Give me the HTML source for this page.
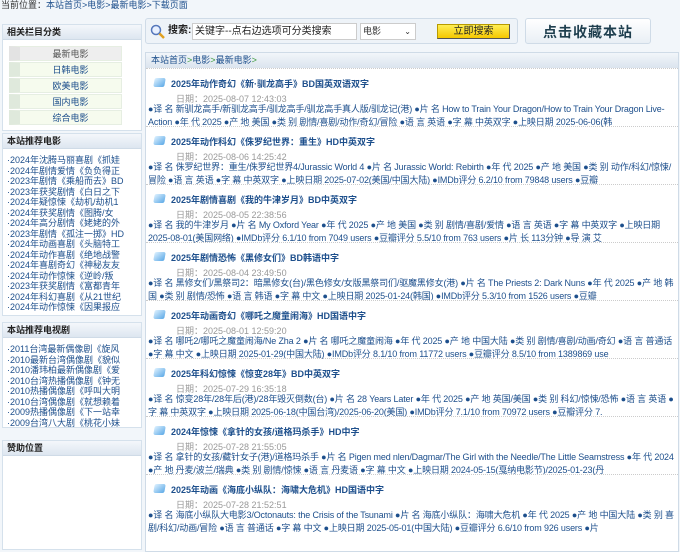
<!DOCTYPE html>
<html><head><meta charset="utf-8"><style>
*{margin:0;padding:0;box-sizing:border-box}
body{width:680px;height:544px;overflow:hidden;background:#f2f6fa;font-family:"Liberation Sans","Noto Sans CJK SC",sans-serif;font-size:9px;color:#333;position:relative}
a{color:#1d4f8c;text-decoration:none}
.crumb{position:absolute;left:1px;top:0;font-size:9px;color:#1d4f8c;line-height:10px}
.box{position:absolute;left:2px;width:140px;background:#fff;border:1px solid #d5e1ec}
.bh{height:15px;background:linear-gradient(#f4f7fb,#dde6f0);font-weight:bold;font-size:9px;line-height:15px;padding-left:4px;color:#222;border-bottom:1px solid #cfdbe7}
.cat{margin:6px 0 0 6px;width:113px}
.cat div{height:15px;margin-bottom:1px;background:#f6fbee;text-align:center;line-height:15px;color:#1d4f8c;border:1px solid #e6eee2;border-left:11px solid #dfe9dc}
.cat div.first{background:#eee;border-left-color:#e3e3e3;color:#555}
.list{padding:6px 0 0 4px;line-height:10.5px;white-space:nowrap;overflow:hidden}
.list a{display:block;color:#1d4f8c}
.srch{position:absolute;left:145px;top:18px;width:373px;height:26px;border:1px solid #cfdbe7;border-radius:3px;background:#eef3f8}
.fav{position:absolute;left:525px;top:18px;width:126px;height:26px;border:1px solid #cfdbe7;border-radius:3px;background:linear-gradient(#fff,#e9eff5);font-size:14px;font-weight:bold;color:#1e3e4e;text-align:center;line-height:26px;letter-spacing:1px}
.main{position:absolute;left:145px;top:52px;width:534px;height:500px;background:#fff;border:1px solid #cfdbe7}
.mh{height:15px;background:linear-gradient(#f2f6fa,#dbe4ee);line-height:15px;padding-left:5px;color:#1d4f8c;font-size:9px}
.mh b{color:#3a9a3a;font-weight:normal}
.it{height:58px;border-top:1px dotted #ccc;position:relative;padding:0 2px}
.it .t{position:absolute;left:25px;top:8px;font-weight:bold;color:#1d4f8c;font-size:9px}
.it .ic{position:absolute;left:8px;top:9px;width:11px;height:9px;background:linear-gradient(135deg,#dff2ff,#5aa8e6);transform:skewX(-10deg);border-radius:2px}
.it .d{position:absolute;left:30px;top:23px;color:#999;font-size:9px}
.it .x{position:absolute;left:2px;top:34px;right:4px;line-height:12.5px;color:#1d4f8c;font-size:9px;height:26px;overflow:hidden;letter-spacing:-0.15px}
</style></head><body>
<div class="crumb"><span style="color:#333">当前位置：</span>本站首页&gt;电影&gt;最新电影&gt;下载页面</div>

<div class="box" style="top:24px;height:107px"><div class="bh">相关栏目分类</div>
<div class="cat"><div class="first">最新电影</div><div>日韩电影</div><div>欧美电影</div><div>国内电影</div><div>综合电影</div></div></div>

<div class="box" style="top:133px;height:183px"><div class="bh">本站推荐电影</div>
<div class="list"><a>·2024年沈腾马丽喜剧《抓娃</a><a>·2024年剧情爱情《负负得正</a><a>·2023年剧情《乘船而去》BD</a><a>·2023年获奖剧情《白日之下</a><a>·2024年疑惊悚《劫机/劫机1</a><a>·2024年获奖剧情《图腾/女</a><a>·2024年高分剧情《姥姥的外</a><a>·2023年剧情《孤注一掷》HD</a><a>·2024年动画喜剧《头脑特工</a><a>·2024年动作喜剧《绝地战警</a><a>·2024年喜剧奇幻《神秘友友</a><a>·2024年动作惊悚《逆岭/叛</a><a>·2023年获奖剧情《富都青年</a><a>·2024年科幻喜剧《从21世纪</a><a>·2024年动作惊悚《因果报应</a></div></div>

<div class="box" style="top:322px;height:106px"><div class="bh">本站推荐电视剧</div>
<div class="list"><a>·2011台湾最新偶像剧《旋风</a><a>·2010最新台湾偶像剧《貌似</a><a>·2010潘玮柏最新偶像剧《爱</a><a>·2010台湾热播偶像剧《钟无</a><a>·2010热播偶像剧《呼叫大明</a><a>·2010台湾偶像剧《就想赖着</a><a>·2009热播偶像剧《下一站幸</a><a>·2009台湾八大剧《桃花小妹</a></div></div>

<div class="box" style="top:440px;height:110px"><div class="bh">赞助位置</div></div>

<div class="srch">
<svg style="position:absolute;left:4px;top:5px" width="16" height="16"><circle cx="6" cy="6" r="4.5" fill="#e8f0ff" stroke="#5577bb" stroke-width="1.5"/><line x1="9.5" y1="9.5" x2="14" y2="14" stroke="#e0a020" stroke-width="2.5"/></svg>
<span style="position:absolute;left:22px;top:5px;font-size:10px;line-height:14px;font-weight:bold;color:#222">搜索:</span>
<div style="position:absolute;left:46px;top:4px;width:165px;height:17px;background:#fff;border:1px solid #ccc;font-size:10px;line-height:15px;padding-left:2px;color:#222">关键字--点右边选项可分类搜索</div>
<div style="position:absolute;left:214px;top:4px;width:56px;height:17px;background:#fff;border:1px solid #ccc;font-size:9px;line-height:15px;padding-left:2px">电影<span style="position:absolute;right:4px;font-size:8px">⌄</span></div>
<div style="position:absolute;left:291px;top:5px;width:73px;height:15px;background:linear-gradient(#ffee55,#f5c800);border:1px solid #b89b00;border-right-color:#555;border-bottom-color:#555;font-size:10px;text-align:center;line-height:13px;color:#222">立即搜索</div>
</div>
<div class="fav">点击收藏本站</div>

<div class="main"><div class="mh">本站首页<b>&gt;</b>电影<b>&gt;</b>最新电影<b>&gt;</b></div>
<div class="it"><span class="ic"></span><a class="t">2025年动作奇幻《新·驯龙高手》BD国英双语双字</a><span class="d">日期：2025-08-07 12:43:03</span><div class="x">●译 名 新驯龙高手/新驯龙高手/驯龙高手/驯龙高手真人版/驯龙记(港) ●片 名 How to Train Your Dragon/How to Train Your Dragon Live-Action ●年 代 2025 ●产 地 美国 ●类 别 剧情/喜剧/动作/奇幻/冒险 ●语 言 英语 ●字 幕 中英双字 ●上映日期 2025-06-06(韩</div></div>
<div class="it"><span class="ic"></span><a class="t">2025年动作科幻《侏罗纪世界：重生》HD中英双字</a><span class="d">日期：2025-08-06 14:25:42</span><div class="x">●译 名 侏罗纪世界：重生/侏罗纪世界4/Jurassic World 4 ●片 名 Jurassic World: Rebirth ●年 代 2025 ●产 地 美国 ●类 别 动作/科幻/惊悚/冒险 ●语 言 英语 ●字 幕 中英双字 ●上映日期 2025-07-02(美国/中国大陆) ●IMDb评分 6.2/10 from 79848 users ●豆瓣</div></div>
<div class="it"><span class="ic"></span><a class="t">2025年剧情喜剧《我的牛津岁月》BD中英双字</a><span class="d">日期：2025-08-05 22:38:56</span><div class="x">●译 名 我的牛津岁月 ●片 名 My Oxford Year ●年 代 2025 ●产 地 美国 ●类 别 剧情/喜剧/爱情 ●语 言 英语 ●字 幕 中英双字 ●上映日期 2025-08-01(美国网络) ●IMDb评分 6.1/10 from 7049 users ●豆瓣评分 5.5/10 from 763 users ●片 长 113分钟 ●导 演 艾</div></div>
<div class="it"><span class="ic"></span><a class="t">2025年剧情恐怖《黑修女们》BD韩语中字</a><span class="d">日期：2025-08-04 23:49:50</span><div class="x">●译 名 黑修女们/黑祭司2：暗黑修女(台)/黑色修女/女版黑祭司们/驱魔黑修女(港) ●片 名 The Priests 2: Dark Nuns ●年 代 2025 ●产 地 韩国 ●类 别 剧情/恐怖 ●语 言 韩语 ●字 幕 中文 ●上映日期 2025-01-24(韩国) ●IMDb评分 5.3/10 from 1526 users ●豆瓣</div></div>
<div class="it"><span class="ic"></span><a class="t">2025年动画奇幻《哪吒之魔童闹海》HD国语中字</a><span class="d">日期：2025-08-01 12:59:20</span><div class="x">●译 名 哪吒2/哪吒之魔童闹海/Ne Zha 2 ●片 名 哪吒之魔童闹海 ●年 代 2025 ●产 地 中国大陆 ●类 别 剧情/喜剧/动画/奇幻 ●语 言 普通话 ●字 幕 中文 ●上映日期 2025-01-29(中国大陆) ●IMDb评分 8.1/10 from 11772 users ●豆瓣评分 8.5/10 from 1389869 use</div></div>
<div class="it"><span class="ic"></span><a class="t">2025年科幻惊悚《惊变28年》BD中英双字</a><span class="d">日期：2025-07-29 16:35:18</span><div class="x">●译 名 惊变28年/28年后(港)/28年毁灭倒数(台) ●片 名 28 Years Later ●年 代 2025 ●产 地 英国/美国 ●类 别 科幻/惊悚/恐怖 ●语 言 英语 ●字 幕 中英双字 ●上映日期 2025-06-18(中国台湾)/2025-06-20(美国) ●IMDb评分 7.1/10 from 70972 users ●豆瓣评分 7.</div></div>
<div class="it"><span class="ic"></span><a class="t">2024年惊悚《拿针的女孩/道格玛杀手》HD中字</a><span class="d">日期：2025-07-28 21:55:05</span><div class="x">●译 名 拿针的女孩/藏针女子(港)/道格玛杀手 ●片 名 Pigen med nlen/Dagmar/The Girl with the Needle/The Little Seamstress ●年 代 2024 ●产 地 丹麦/波兰/瑞典 ●类 别 剧情/惊悚 ●语 言 丹麦语 ●字 幕 中文 ●上映日期 2024-05-15(戛纳电影节)/2025-01-23(丹</div></div>
<div class="it"><span class="ic"></span><a class="t">2025年动画《海底小纵队：海啸大危机》HD国语中字</a><span class="d">日期：2025-07-28 21:52:51</span><div class="x">●译 名 海底小纵队大电影3/Octonauts: the Crisis of the Tsunami ●片 名 海底小纵队：海啸大危机 ●年 代 2025 ●产 地 中国大陆 ●类 别 喜剧/科幻/动画/冒险 ●语 言 普通话 ●字 幕 中文 ●上映日期 2025-05-01(中国大陆) ●豆瓣评分 6.6/10 from 926 users ●片</div></div>
</div>
</body></html>
